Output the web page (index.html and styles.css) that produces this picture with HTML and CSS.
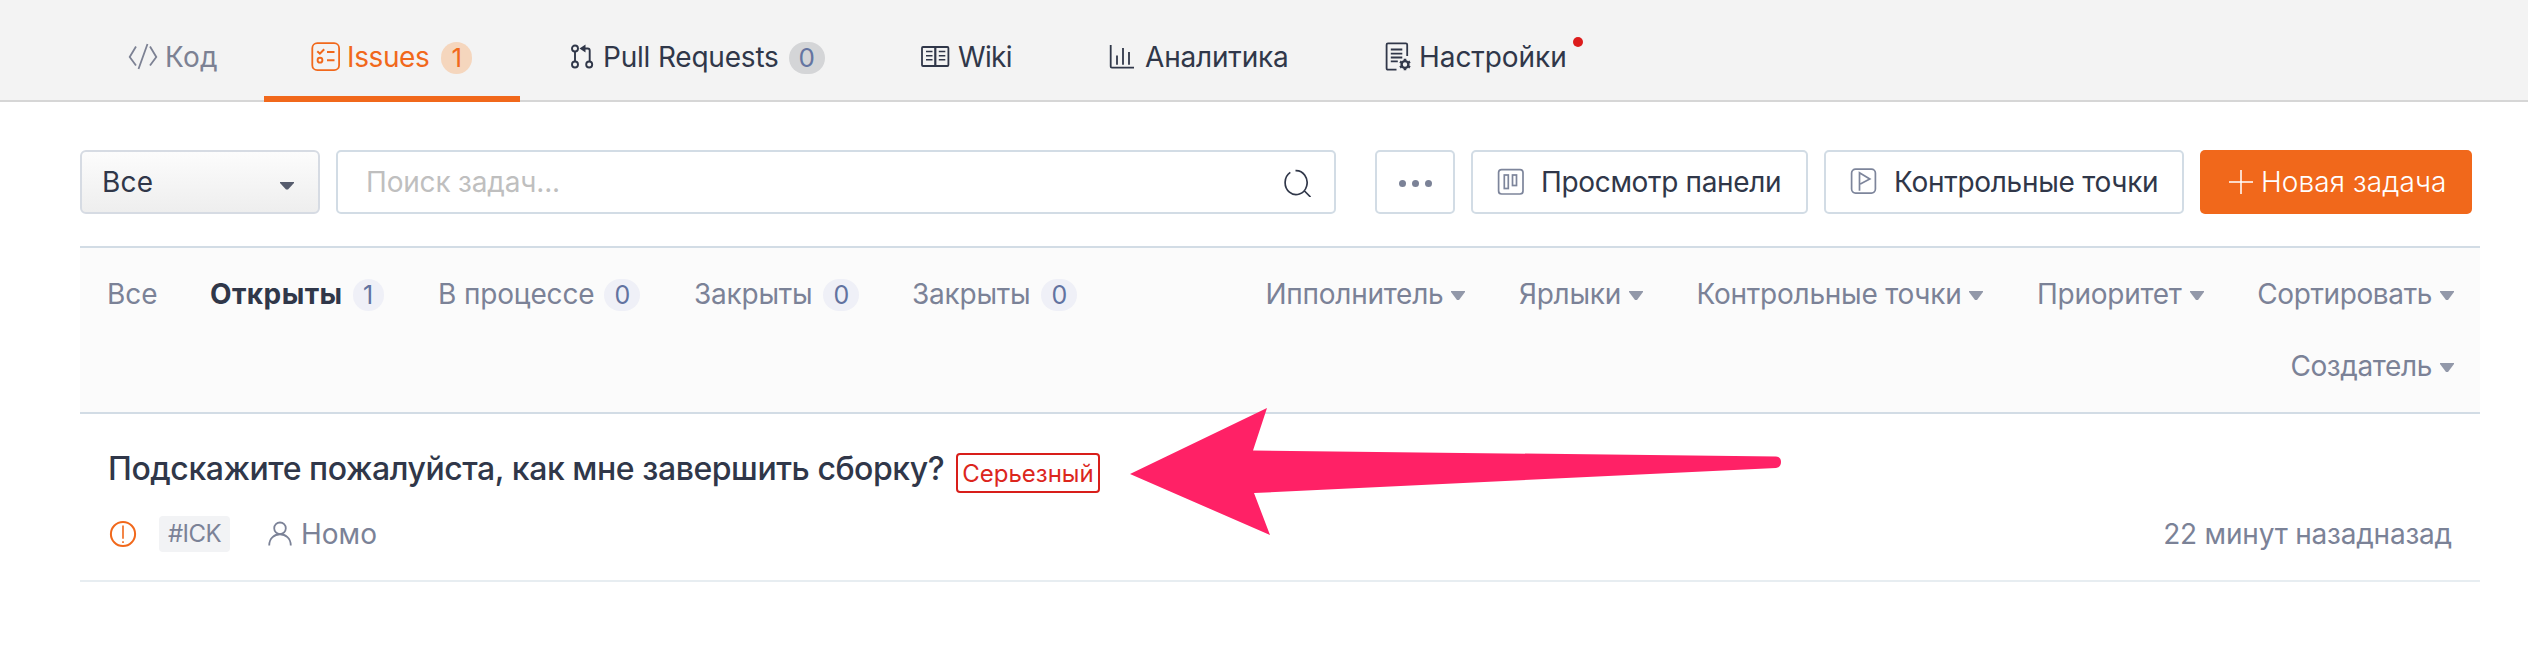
FILE: index.html
```html
<!DOCTYPE html>
<html lang="ru">
<head>
<meta charset="utf-8">
<title>Issues</title>
<link rel="stylesheet" href="styles.css">
</head>
<body>
<nav class="nav">
  <a class="tab tab-muted">
    <svg class="icon" viewBox="0 0 30 30"><path d="M8 4.5 1.7 15 8 23.5M22 4.5 28.3 15 22 23.5M19.5 2 10.5 27"/></svg>
    <span class="t-code">Код</span>
  </a>
  <a class="tab tab-active">
    <svg class="icon" viewBox="0 0 30 30"><rect x="1.3" y="1.2" width="26.8" height="27" rx="5"/><path stroke-width="2" d="M6.3 9.2 8.9 11.7 13.2 7.2M16 10h7.5M16 18.2h7.5"/><circle cx="9" cy="18.2" r="2.4" stroke-width="1.9"/></svg>
    <span class="t-issues">Issues</span><b class="badge badge-orange">1</b>
  </a>
  <a class="tab tab-pr">
    <svg class="icon" viewBox="0 0 30 30"><g stroke-width="1.9"><circle cx="9" cy="6.5" r="3"/><circle cx="9" cy="22.5" r="3"/><circle cx="23.2" cy="22.5" r="3"/><path d="M9 9.5v10M19 6.5h2.700q2 0 2 2v11"/></g><path class="solid" d="M13.5 6.500l6-4v8z"/></svg>
    <span class="t-pr">Pull Requests</span><b class="badge badge-gray">0</b>
  </a>
  <a class="tab">
    <svg class="icon" viewBox="0 0 30 30"><rect x="1" y="5" width="26.4" height="19" rx="1"/><path d="M14.3 5v19" stroke-width="2.2"/><path d="M5 9.5h6.500M5 13.700h6.500M5 17.800h6.500M17.800 9.500h6.500M17.800 13.700h6.500M17.800 17.800h6.500" stroke-width="1.5"/></svg>
    <span class="t-wiki">Wiki</span>
  </a>
  <a class="tab">
    <svg class="icon" viewBox="0 0 30 30"><path d="M2.700 3v21.500q0 1.200 1.200 1.200H26M9 13.500v9.300M15 6v16.800M21 10v12.800"/></svg>
    <span class="t-tight">Аналитика</span>
  </a>
  <a class="tab">
    <svg class="icon" viewBox="0 0 30 30"><path d="M14.500 27.600H6q-1.400 0-1.400-1.400V2.800Q4.600 1.400 6 1.400H23.800q1.400 0 1.400 1.400V14M8.800 7.500h11.500M8.800 11.600h11.500M8.800 15.500h11.500M8.800 19.400h7"/><circle cx="23" cy="22.500" r="3.400" stroke-width="2.400"/><path stroke-width="2.600" d="M23 16.800v1.600M23 26.600v1.600M18 19.600l1.400.8M26.600 24.600l1.400.8M18 25.400l1.400-.8M26.600 20.400l1.400-.8"/></svg>
    <span class="settings">Настройки<i class="dot"></i></span>
  </a>
</nav>

<main class="page">
  <div class="toolbar">
    <div class="box select"><span>Все</span><svg class="select-caret" viewBox="0 0 14 8"><path d="M0 0h14v1L8 7.600H6L0 1z"/></svg></div>
    <div class="box search"><span class="placeholder">Поиск задач...</span>
      <svg class="search-icon" viewBox="0 0 28 28"><path d="M11.500 1.600A11 12 0 1 1 6.300 3.400M20.500 22l6 6"/></svg></div>
    <div class="box more"><i></i><i></i><i></i></div>
    <div class="box btn btn-board"><svg class="btn-icon" viewBox="0 0 28 28"><rect x="1.600" y="1.600" width="24.400" height="24.400" rx="3"/><rect x="7.300" y="7" width="4" height="13.500"/><rect x="15.500" y="7" width="4" height="10.500"/></svg><span class="t-board">Просмотр панели</span></div>
    <div class="box btn btn-points"><svg class="btn-icon" viewBox="0 0 28 28"><rect x="1.600" y="1.100" width="23.800" height="24" rx="4"/><path d="M9.500 22.800V4.800L19.800 11 10.300 16"/></svg><span class="t-points">Контрольные точки</span></div>
    <div class="btn-new"><svg class="plus" viewBox="0 0 26 26"><path d="M1 13h24M13 1v24"/></svg><span>Новая задача</span></div>
  </div>

  <section class="filters">
    <div class="states">
      <a class="state">Все</a>
      <a class="state state-on"><span>Открыты</span><b class="badge count count-one">1</b></a>
      <a class="state"><span class="t-process">В процессе</span><b class="badge count">0</b></a>
      <a class="state"><span class="t-closed">Закрыты</span><b class="badge count">0</b></a>
      <a class="state"><span class="t-closed">Закрыты</span><b class="badge count">0</b></a>
    </div>
    <div class="menus">
      <a class="menu">Ипполнитель<svg class="caret" viewBox="0 0 14 9"><path d="M0 0h14v1L8 9H6L0 1z"/></svg></a>
      <a class="menu">Ярлыки<svg class="caret" viewBox="0 0 14 9"><path d="M0 0h14v1L8 9H6L0 1z"/></svg></a>
      <a class="menu">Контрольные точки<svg class="caret" viewBox="0 0 14 9"><path d="M0 0h14v1L8 9H6L0 1z"/></svg></a>
      <a class="menu">Приоритет<svg class="caret" viewBox="0 0 14 9"><path d="M0 0h14v1L8 9H6L0 1z"/></svg></a>
      <a class="menu menu-narrow">Сортировать<svg class="caret" viewBox="0 0 14 9"><path d="M0 0h14v1L8 9H6L0 1z"/></svg></a>
      <a class="menu menu-narrow">Создатель<svg class="caret" viewBox="0 0 14 9"><path d="M0 0h14v1L8 9H6L0 1z"/></svg></a>
    </div>
  </section>

  <article class="issue">
    <div class="issue-head"><h2 class="title">Подскажите пожалуйста, как мне завершить сборку?</h2><span class="priority">Серьезный</span></div>
    <div class="meta">
      <svg class="alert" viewBox="0 0 28 28"><circle cx="14" cy="14" r="12.100" stroke-width="2"/><path stroke-width="1.600" d="M14 5.500v13.300M14 21.200v1.800"/></svg>
      <span class="key">#ICK</span>
      <svg class="user" viewBox="0 0 28 28"><circle cx="14" cy="8.300" r="5.800"/><path d="M3.200 25.500C3.200 10.500 24.800 10.500 24.800 25.500"/></svg>
      <span>Номо</span>
      <time class="time">22 минут назадназад</time>
    </div>
  </article>
</main>
<svg class="arrow" viewBox="0 0 656 132"><path d="M2 67 139 1 125 43.500 648 49.500Q653 50 653 55T648 61L126 86 142 128Z"/></svg>
</body>
</html>
```
FILE: styles.css
```css
* { box-sizing: border-box; }
body {
  position: relative;
  margin: 0;
  width: 2528px;
  height: 670px;
  overflow: hidden;
  background: #fff;
  color: #303749;
  font: 400 28px/36px Inter, "Noto Sans", sans-serif;
  white-space: nowrap;
}
svg { flex: none; fill: none; stroke: currentColor; stroke-width: 1.8; }
svg .solid { fill: currentColor; stroke: none; }

/* Repository navigation */
.nav {
  display: grid;
  grid-template-columns: 183px 256px 354px 187px 274px 256px;
  height: 102px;
  padding-left: 81px;
  background: #f3f3f3;
  border-bottom: 2px solid #d6d6d6;
}
.tab { display: flex; align-items: center; gap: 6px; height: 102px; padding: 12px 0 0 47px; }
.tab-muted { color: #7c8193; }
.tab-active { color: #f1681b; border-bottom: 6px solid #f1681b; padding-top: 18px; }
.tab-pr { padding-left: 46px; }
.icon { width: 30px; height: 30px; }
.tab span { margin-left: 1px; }
.t-code { letter-spacing: .25px; }
.tab .t-issues { letter-spacing: -.39px; margin-left: 0; }
.t-pr { letter-spacing: -.2px; }
.t-wiki { letter-spacing: -.7px; }
.t-tight { letter-spacing: -.18px; }
.settings { position: relative; letter-spacing: -.06px; }
.dot {
  position: absolute;
  top: -2px;
  right: -16px;
  width: 10px;
  height: 10px;
  border-radius: 50%;
  background: #dc1c1c;
}
.badge {
  display: flex;
  align-items: center;
  justify-content: center;
  width: 36px;
  height: 32px;
  border-radius: 16px;
  font-size: 26px;
  font-weight: 400;
  letter-spacing: 0;
}
.badge-orange { width: 31px; margin: 2px 0 0 6px; background: #f5d6bd; }
.badge-gray { margin: 2px 0 0 4px; background: #d4d5d7; color: #6575a1; }

/* Search and actions */
.page { width: 2400px; margin-left: 80px; }
.toolbar { display: flex; height: 144px; padding-top: 48px; }
.box {
  display: flex;
  align-items: center;
  height: 64px;
  border: 2px solid #d2dce5;
  border-radius: 5px;
}
.select {
  justify-content: space-between;
  width: 240px;
  margin-right: 16px;
  padding: 0 24px 0 20px;
  border-color: #d6dbe3;
  border-radius: 6px;
  background: linear-gradient(#fcfcfc, #eee);
  letter-spacing: .2px;
}
.select-caret { width: 14px; height: 8px; margin-top: 7px; fill: #565c6d; stroke: none; }
.search { justify-content: space-between; width: 1000px; padding: 0 22px 0 28px; }
.placeholder { color: #bfbfbf; letter-spacing: -.18px; }
.search-icon { width: 28px; height: 28px; margin-top: 2px; stroke-width: 1.700; }
.more { justify-content: center; gap: 6px; width: 80px; margin: 0 16px 0 39px; padding-top: 3px; }
.more i { width: 7px; height: 7px; border-radius: 50%; background: #7b8297; }
.btn-board { width: 337px; margin-right: 16px; padding-left: 24px; }
.btn-points { width: 360px; margin-right: 16px; padding-left: 24px; }
.btn-icon { width: 28px; height: 28px; margin-right: 16px; color: #7d859b; stroke-width: 1.700; }
.t-board { letter-spacing: -.34px; }
.t-points { letter-spacing: -.28px; }
.btn-new {
  display: flex;
  align-items: center;
  gap: 7px;
  width: 272px;
  height: 64px;
  padding-left: 28px;
  border-radius: 5px;
  background: #f1681b;
  color: #fff;
  font-weight: 300;
  letter-spacing: .1px;
}
.plus { width: 26px; height: 26px; stroke-width: 1.500; }

/* State and attribute filters */
.filters {
  display: flex;
  justify-content: space-between;
  height: 168px;
  padding: 10px 26px;
  background: #fbfbfb;
  border: solid #d2dce5;
  border-width: 2px 0;
  color: #7b8297;
}
.states { display: grid; grid-template-columns: 103px 228px 256px 218px 170px; height: 72px; margin-left: 1px; }
.state { display: flex; align-items: center; gap: 10px; }
.state-on { color: #303749; font-weight: 700; letter-spacing: .4px; }
.t-process { letter-spacing: -.15px; }
.t-closed { letter-spacing: -.24px; margin-right: 1px; }
.count { font-size: 25px; margin-top: 2px; background: #eff0f7; color: #6273a0; }
.count-one { width: 31px; }
.menus { display: flex; flex-wrap: wrap; justify-content: flex-end; align-content: flex-start; column-gap: 53.500px; width: 1200px; }
.menu { display: flex; align-items: center; height: 72px; letter-spacing: -.25px; }
.menu-narrow { letter-spacing: -.38px; }
.caret { width: 14px; height: 9px; margin: 3px 0 0 8px; fill: #9298a9; stroke: none; }

/* Issue row */
.issue { height: 168px; padding: 26px 26px 0; border-bottom: 2px solid #e7edf1; }
.issue-head { display: flex; align-items: center; height: 56px; }
.title { margin: 1px 12px 0 2px; font-size: 32px; font-weight: 500; line-height: 40px; letter-spacing: -.44px; }
.priority {
  width: 144px;
  height: 40px;
  margin-top: 10px;
  padding-left: 4px;
  border: 2px solid #d81e1a;
  border-radius: 4px;
  color: #dc261d;
  font-size: 24px;
  line-height: 37px;
}
.meta { display: flex; align-items: center; height: 36px; margin-top: 20px; color: #7b8297; }
.alert { width: 28px; height: 28px; margin: 0 22px 0 3px; color: #f1681b; }
.key {
  width: 71px;
  height: 36px;
  margin-right: 36px;
  padding-left: 9px;
  border-radius: 4px;
  background: #f2f3f5;
  font-size: 24px;
  letter-spacing: -.6px;
}
.user { width: 28px; height: 28px; margin-right: 7px; }
.time { margin: 0 2px 0 auto; letter-spacing: -.2px; }

/* Callout arrow over the list */
.arrow { position: absolute; left: 1128px; top: 407px; width: 656px; height: 132px; fill: #ff2166; stroke: none; }
```
